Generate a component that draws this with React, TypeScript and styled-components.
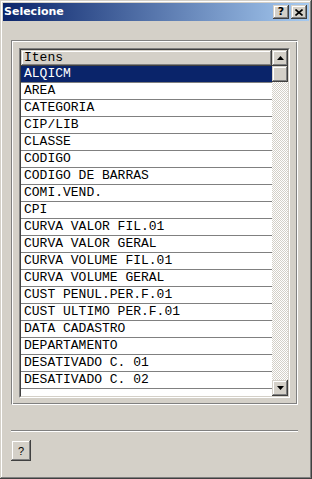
import React from "react";
import styled, { createGlobalStyle } from "styled-components";

const GlobalStyle = createGlobalStyle`
  html, body { margin: 0; padding: 0; background: #d4d0c8; }
  * { box-sizing: border-box; }
`;

const raised = `box-shadow: inset -1px -1px #404040, inset 1px 1px #d4d0c8, inset -2px -2px #808080, inset 2px 2px #ffffff;`;

const Window = styled.div`
  width: 312px;
  height: 479px;
  background: #d4d0c8;
  padding: 3px;
  display: flex;
  flex-direction: column;
  ${raised}
`;

const TitleBar = styled.div`
  height: 18px;
  flex: none;
  display: flex;
  align-items: center;
  padding: 0 2px 0 1px;
  background: linear-gradient(to right, #0a246a, #a6caf0);
`;

const Title = styled.span`
  flex: 1;
  color: #ffffff;
  font: bold 11px "DejaVu Sans", sans-serif;
  line-height: 18px;
`;

const CaptionButton = styled.div<{ $gap?: number }>`
  width: 16px;
  height: 14px;
  margin-left: ${(p) => p.$gap ?? 0}px;
  background: #d4d0c8;
  display: flex;
  align-items: center;
  justify-content: center;
  color: #000;
  font: bold 11px "DejaVu Sans", sans-serif;
  line-height: 14px;
  ${raised}
`;

const Client = styled.div`
  flex: 1;
  display: flex;
  flex-direction: column;
  padding: 19px 11px 0 8px;
`;

const GroupBox = styled.div`
  height: 365px;
  flex: none;
  display: flex;
  padding: 7px 7px 6px 7px;
  border-top: 1px solid #808080;
  border-left: 1px solid #808080;
  border-right: 1px solid #ffffff;
  border-bottom: 1px solid #ffffff;
  box-shadow: inset 1px 1px #ffffff, inset -1px -1px #808080;
`;

const ListOuter = styled.div`
  flex: 1;
  display: flex;
  border-top: 1px solid #808080;
  border-left: 1px solid #808080;
  border-right: 1px solid #ffffff;
  border-bottom: 1px solid #ffffff;
`;

const ListInner = styled.div`
  flex: 1;
  display: flex;
  border-top: 1px solid #404040;
  border-left: 1px solid #404040;
  border-right: 1px solid #d4d0c8;
  border-bottom: 1px solid #d4d0c8;
  background: #ffffff;
  overflow: hidden;
`;

const RowsPane = styled.div`
  flex: 1;
  display: flex;
  flex-direction: column;
  overflow: hidden;
  background: #ffffff;
`;

const HeaderCell = styled.div`
  height: 16px;
  flex: none;
  background: #d4d0c8;
  padding-left: 3px;
  font: 13px "Liberation Mono", "Courier New", monospace;
  line-height: 16px;
  color: #000;
  ${raised}
`;

const Row = styled.div<{ $selected?: boolean }>`
  height: 17px;
  flex: none;
  padding-left: 3px;
  border-bottom: 1px solid #808080;
  background: ${(p) => (p.$selected ? "#0a246a" : "#ffffff")};
  color: ${(p) => (p.$selected ? "#ffffff" : "#000000")};
  font: 13px "Liberation Mono", "Courier New", monospace;
  line-height: 16px;
  white-space: pre;
`;

const ScrollBar = styled.div`
  width: 16px;
  flex: none;
  display: flex;
  flex-direction: column;
`;

const ScrollButton = styled.div`
  width: 16px;
  height: 16px;
  flex: none;
  background: #d4d0c8;
  display: flex;
  align-items: center;
  justify-content: center;
  ${raised}
`;

const Track = styled.div`
  flex: 1;
  background-color: #d4d0c8;
  background-image: conic-gradient(#ffffff 25%, #d4d0c8 0 50%, #ffffff 0 75%, #d4d0c8 0);
  background-size: 2px 2px;
`;

const Separator = styled.div`
  margin-top: 25px;
  height: 2px;
  flex: none;
  border-top: 1px solid #808080;
  border-bottom: 1px solid #ffffff;
`;

const HelpButton = styled.div`
  margin-top: 8px;
  width: 20px;
  height: 21px;
  background: #d4d0c8;
  display: flex;
  align-items: center;
  justify-content: center;
  font: 11px "Liberation Sans", Arial, sans-serif;
  color: #000;
  ${raised}
`;

const Arrow = ({ down }: { down?: boolean }) => (
  <svg width="7" height="4" viewBox="0 0 7 4" style={{ display: "block" }}>
    {down ? <polygon points="0,0 7,0 3.5,4" fill="#000" /> : <polygon points="0,4 7,4 3.5,0" fill="#000" />}
  </svg>
);

const CloseGlyph = () => (
  <svg width="8" height="7" viewBox="0 0 8 7" style={{ display: "block" }}>
    <path d="M0.5 0.5 L7.5 6.5 M7.5 0.5 L0.5 6.5" stroke="#000" strokeWidth="1.6" />
  </svg>
);

const items = [
  "ALQICM",
  "AREA",
  "CATEGORIA",
  "CIP/LIB",
  "CLASSE",
  "CODIGO",
  "CODIGO DE BARRAS",
  "COMI.VEND.",
  "CPI",
  "CURVA VALOR FIL.01",
  "CURVA VALOR GERAL",
  "CURVA VOLUME FIL.01",
  "CURVA VOLUME GERAL",
  "CUST PENUL.PER.F.01",
  "CUST ULTIMO PER.F.01",
  "DATA CADASTRO",
  "DEPARTAMENTO",
  "DESATIVADO C. 01",
  "DESATIVADO C. 02",
];

export default function App() {
  return (
    <>
      <GlobalStyle />
      <Window>
        <TitleBar>
          <Title>Selecione</Title>
          <CaptionButton>?</CaptionButton>
          <CaptionButton $gap={2}>
            <CloseGlyph />
          </CaptionButton>
        </TitleBar>
        <Client>
          <GroupBox>
            <ListOuter>
              <ListInner>
                <RowsPane>
                  <HeaderCell>Itens</HeaderCell>
                  {items.map((it, i) => (
                    <Row key={it} $selected={i === 0}>
                      {it}
                    </Row>
                  ))}
                </RowsPane>
                <ScrollBar>
                  <ScrollButton>
                    <Arrow />
                  </ScrollButton>
                  <ScrollButton />
                  <Track />
                  <ScrollButton>
                    <Arrow down />
                  </ScrollButton>
                </ScrollBar>
              </ListInner>
            </ListOuter>
          </GroupBox>
          <Separator />
          <HelpButton>?</HelpButton>
        </Client>
      </Window>
    </>
  );
}
